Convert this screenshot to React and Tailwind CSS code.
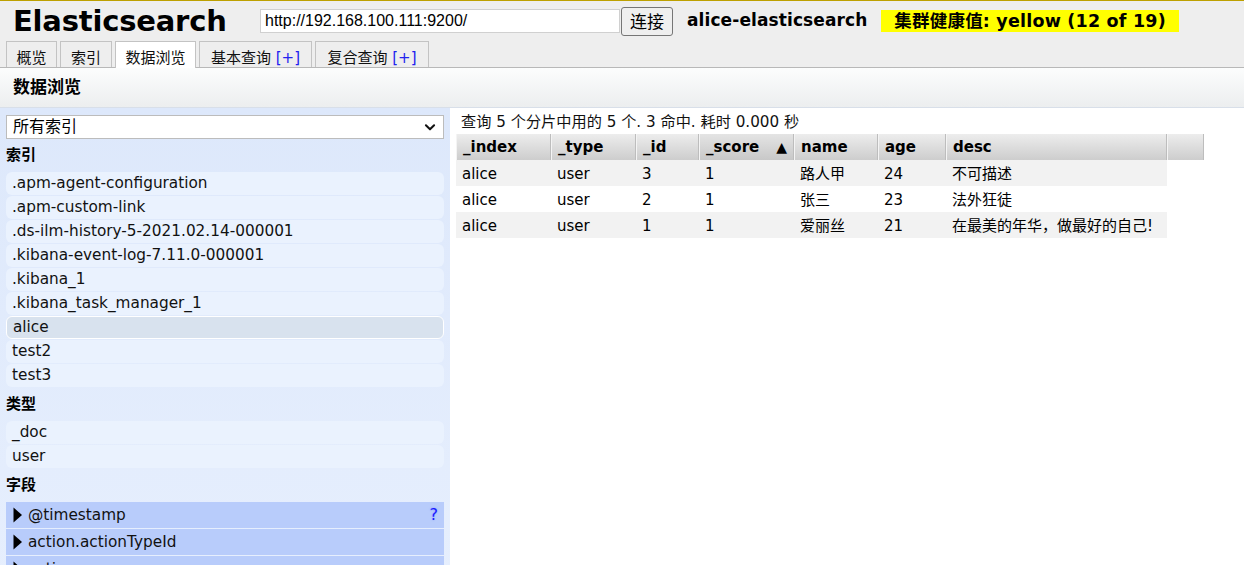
import React from "react";

const indices = [
  ".apm-agent-configuration",
  ".apm-custom-link",
  ".ds-ilm-history-5-2021.02.14-000001",
  ".kibana-event-log-7.11.0-000001",
  ".kibana_1",
  ".kibana_task_manager_1",
  "alice",
  "test2",
  "test3",
];

const cols = [
  { key: "_index", w: "w-[95px]" },
  { key: "_type", w: "w-[85px]" },
  { key: "_id", w: "w-[63px]" },
  { key: "_score", w: "w-[95px]" },
  { key: "name", w: "w-[84px]" },
  { key: "age", w: "w-[68px]" },
  { key: "desc", w: "w-[221px]" },
];

const rows = [
  ["alice", "user", "3", "1", "路人甲", "24", "不可描述"],
  ["alice", "user", "2", "1", "张三", "23", "法外狂徒"],
  ["alice", "user", "1", "1", "爱丽丝", "21", "在最美的年华，做最好的自己!"],
];

const Tab = ({ children, active, w }) => (
  <div
    className={`${w} flex justify-center pt-[5px] border border-b-0 border-[#c3c3c3] ${
      active ? "bg-white h-[27px] -mb-px" : "bg-[#eeeeee] h-[26px]"
    }`}
  >
    {children}
  </div>
);

const SideHeader = ({ children }) => (
  <div className="h-[33px] flex items-center font-bold text-[15px] text-black">{children}</div>
);

const SideItem = ({ children, active }) => (
  <div
    className={`h-[23px] mb-px flex items-center pl-[6px] rounded-[6px] ${
      active ? "bg-[#d8e2ee] border border-white" : "bg-[#eaf2fe]"
    }`}
  >
    {children}
  </div>
);

const Field = ({ name, help }) => (
  <div className="h-[26px] mb-px flex items-center bg-[#b8ccfb] pl-[6px] pr-[4px]">
    <svg width="11" height="18" viewBox="0 0 11 18" className="shrink-0 mr-[5px]">
      <path d="M1.5 1.5 L10 9 L1.5 16.5 Z" fill="#000" />
    </svg>
    <span className="flex-1">{name}</span>
    {help && <span className="mr-[2px] text-[#1a1aff] text-[16px] [text-shadow:0_0_2px_#8899ff]">?</span>}
  </div>
);

export default function App() {
  return (
    <div className="w-full h-[565px] overflow-hidden bg-white text-[15px] text-[#111] font-['DejaVu_Sans','Noto_Sans_CJK_SC',sans-serif]">
      {/* Header */}
      <div className="bg-[#eeeeee] border-t border-[#bda000]">
        <div className="h-[40px] flex items-center pl-[13px]">
          <div className="w-[247px] font-bold text-[29px] leading-none text-black tracking-[-0.2px]">Elasticsearch</div>
          <input
            readOnly
            value="http://192.168.100.111:9200/"
            className="w-[360px] h-[24px] bg-white border border-[#d0d0d0] px-[4px] text-[16px] font-['Liberation_Sans',sans-serif] text-black outline-none"
          />
          <button className="ml-px h-[29px] w-[52px] rounded-[3px] border border-[#767676] bg-[#efefef] text-[17px] font-['Noto_Sans_CJK_SC',sans-serif] text-black">
            连接
          </button>
          <div className="ml-[14px] font-bold text-[17px] text-black tracking-[0.1px]">alice-elasticsearch</div>
          <div className="ml-[14px] h-[22px] px-[13px] bg-[#ffff00] flex items-center font-bold text-[17.5px] text-black tracking-[0.2px]">
            集群健康值: yellow (12 of 19)
          </div>
        </div>
        <div className="flex items-end gap-[3px] pl-[6px] h-[27px] border-b border-[#b8b8b8]">
          <Tab w="w-[51px]">概览</Tab>
          <Tab w="w-[52px]">索引</Tab>
          <Tab w="w-[81px]" active>数据浏览</Tab>
          <Tab w="w-[113px]">
            基本查询&nbsp;<span className="text-[#2222ee]">[+]</span>
          </Tab>
          <Tab w="w-[114px]">
            复合查询&nbsp;<span className="text-[#2222ee]">[+]</span>
          </Tab>
        </div>
      </div>

      {/* Section title */}
      <div className="h-[40px] flex items-center pl-[13px] bg-gradient-to-b from-[#fcfdfd] to-[#eceeef] border-b border-[#d8dfe9] font-bold text-[17px] text-black">
        数据浏览
      </div>

      <div className="flex h-full">
        {/* Sidebar */}
        <div className="w-[450px] shrink-0 h-full px-[6px] pt-[7px] bg-gradient-to-b from-[#dde8fb] to-[#e8f0fe] text-[15.3px]">
          <div className="h-[24px] bg-white border border-[#bcbcbc] flex items-center pl-[6px] pr-[6px] text-[16px] text-black">
            <span className="flex-1">所有索引</span>
            <svg width="14" height="14" viewBox="0 0 24 24" fill="none" stroke="#111" strokeWidth="3.5" strokeLinecap="round" strokeLinejoin="round">
              <path d="M5 9l7 7 7-7" />
            </svg>
          </div>
          <SideHeader>索引</SideHeader>
          {indices.map((n) => (
            <SideItem key={n} active={n === "alice"}>{n}</SideItem>
          ))}
          <SideHeader>类型</SideHeader>
          <SideItem>_doc</SideItem>
          <SideItem>user</SideItem>
          <SideHeader>字段</SideHeader>
          <Field name="@timestamp" help />
          <Field name="action.actionTypeId" />
          <Field name="action.name" />
        </div>

        {/* Results */}
        <div className="flex-1 pl-[6px] pt-[3px]">
          <div className="h-[22px] flex items-center pl-[5px] text-[15.2px]">
            查询 5 个分片中用的 5 个. 3 命中. 耗时 0.000 秒
          </div>
          <div className="mt-px">
            <div className="flex h-[26px] bg-gradient-to-b from-[#ededed] to-[#cdcdcd] w-[748px]">
              {cols.map((c) => (
                <div
                  key={c.key}
                  className={`${c.w} flex items-center pl-[6px] font-bold text-[15px] text-black border-l border-[#f4f4f4] border-r border-r-[#bdbdbd] ${
                    c.key === "_score" ? "bg-gradient-to-b from-[#e4e4e4] to-[#c8c8c8]" : ""
                  }`}
                >
                  {c.key}
                  {c.key === "_score" && <span className="ml-auto mr-[6px] text-[14px]">▲</span>}
                </div>
              ))}
              <div className="w-[37px] border-l border-[#f4f4f4] border-r border-r-[#bdbdbd]" />
            </div>
            {rows.map((r, i) => (
              <div key={i} className={`flex h-[26px] w-[711px] ${i % 2 === 0 ? "bg-[#f2f2f2]" : "bg-white"}`}>
                {r.map((v, j) => (
                  <div key={j} className={`${cols[j].w} flex items-center pl-[6px] pt-[2px] text-[15px] text-black`}>
                    {v}
                  </div>
                ))}
              </div>
            ))}
          </div>
        </div>
      </div>
    </div>
  );
}
